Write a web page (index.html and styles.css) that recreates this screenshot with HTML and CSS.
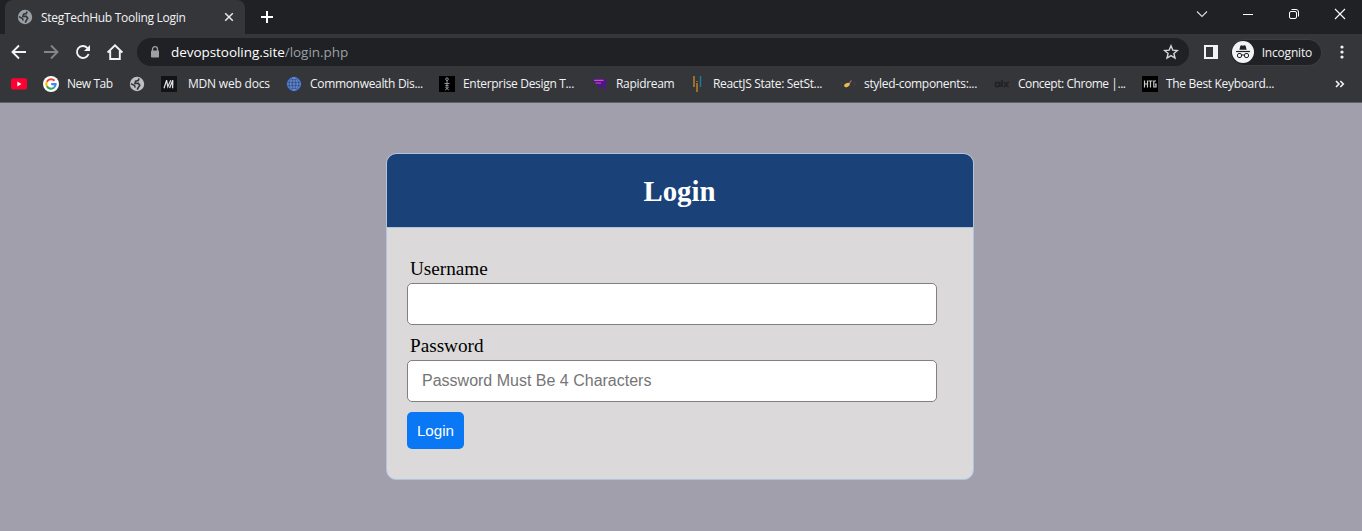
FILE: index.html
```
<!DOCTYPE html>
<html lang="en">
<head>
<meta charset="utf-8">
<title>StegTechHub Tooling Login</title>
<link rel="stylesheet" href="styles.css">
</head>
<body>
<svg width="0" height="0" class="defs">
  <symbol id="globe" viewBox="0 0 16 16"><circle cx="8" cy="8" r="7.2" fill="currentColor"/><path d="M10 2.4 9.3 4.6 6.6 5.2 6 7.4h3.4l1.3 1.8-1.2 1.9-1.3 2.6" fill="none" stroke="#35363a" stroke-width="1.7"/><path d="m1.8 7.6 3.8 2 .6 2" fill="none" stroke="#35363a" stroke-width="1.5"/></symbol>
</svg>
<header class="browser">
  <div class="tabstrip">
    <div class="tab">
      <svg class="tab-icon"><use href="#globe"/></svg>
      <span class="tab-title">StegTechHub Tooling Login</span>
      <svg class="tab-close" viewBox="0 0 10 10"><path d="M1.2 1.2 8.8 8.8M8.8 1.2 1.2 8.8" stroke="#e8eaed" stroke-width="1.5"/></svg>
    </div>
    <svg class="tab-new" viewBox="0 0 12 12"><path d="M6 0v12M0 6h12" stroke="#fff" stroke-width="2"/></svg>
    <div class="window-controls">
      <svg viewBox="0 0 12 12"><path d="m1 3.5 5 5 5-5" fill="none" stroke="#ddd" stroke-width="1.1"/></svg>
      <svg viewBox="0 0 12 12"><path d="M1 6.5h10" stroke="#fff"/></svg>
      <svg viewBox="0 0 12 12"><rect x="1.5" y="3.5" width="7" height="7" rx="1.5" fill="none" stroke="#fff"/><path d="M3.5 1.5H8A2.5 2.5 0 0 1 10.5 4v4.5" fill="none" stroke="#fff"/></svg>
      <svg viewBox="0 0 12 12"><path d="m1 1 10 10M11 1 1 11" stroke="#fff" stroke-width="1.1"/></svg>
    </div>
  </div>
  <div class="toolbar">
    <div class="nav">
      <svg viewBox="0 0 16 16"><path d="M15 8H2M8 1.5 1.5 8 8 14.5" fill="none" stroke="#f1f3f4" stroke-width="1.9"/></svg>
      <svg viewBox="0 0 16 16"><path d="M1 8h13M8 1.5 14.5 8 8 14.5" fill="none" stroke="#85868a" stroke-width="1.9"/></svg>
      <svg viewBox="0 0 16 16"><path d="M13.6 10A6 6 0 1 1 12.3 3.8L14 5.5" fill="none" stroke="#f1f3f4" stroke-width="1.9"/><path d="M15 1v6H9z" fill="#f1f3f4"/></svg>
      <svg viewBox="0 0 16 16"><path d="M.6 8.6 8 1.3l7.4 7.3M3.2 7v8h9.6V7" fill="none" stroke="#f1f3f4" stroke-width="1.9"/></svg>
    </div>
    <div class="omnibox">
      <svg class="lock" viewBox="0 0 10 12"><path d="M2.5 5V3.2a2.5 2.5 0 0 1 5 0V5" fill="none" stroke="#9aa0a6" stroke-width="1.3"/><rect x="1" y="4.5" width="8" height="7" rx=".8" fill="#9aa0a6"/></svg>
      <span class="url">devopstooling.site<span class="path">/login.php</span></span>
      <svg class="star" viewBox="0 0 16 16"><path d="m8 1.8 1.8 4.3 4.6.4-3.5 3 1.1 4.6-4-2.5-4 2.5 1.1-4.6-3.5-3 4.6-.4z" fill="none" stroke="#d5d7da" stroke-width="1.4"/></svg>
    </div>
    <svg class="panel" viewBox="0 0 14 14"><path fill-rule="evenodd" d="M0 0h14v14H0zM2 2v10h7V2z" fill="#f1f3f4"/></svg>
    <div class="incognito">
      <svg viewBox="0 0 22 22"><circle cx="11" cy="11" r="11" fill="#f1f3f4"/><path d="m7.4 8.8 1-4 1-.5 1.6.5 1.6-.5 1 .5 1 4z" fill="#202124"/><path d="M4 10.5h14" stroke="#202124" stroke-width="1.2"/><rect x="5.5" y="12.5" width="4" height="4" rx="1.5" fill="none" stroke="#202124"/><rect x="12.5" y="12.5" width="4" height="4" rx="1.5" fill="none" stroke="#202124"/><path d="M9.5 14h3" stroke="#202124"/></svg>
      <span>Incognito</span>
    </div>
    <svg class="menu" viewBox="0 0 4 14"><g fill="#f1f3f4"><circle cx="2" cy="2" r="1.6"/><circle cx="2" cy="7" r="1.6"/><circle cx="2" cy="12" r="1.6"/></g></svg>
  </div>
  <nav class="bookmarks">
    <a><svg viewBox="0 0 16 16"><rect y="2.2" width="16" height="11.4" rx="2" fill="#ff0033"/><path d="M6.3 5.5v5L10.5 8z" fill="#fff"/></svg></a>
    <a><svg viewBox="0 0 16 16"><circle cx="8" cy="8" r="8" fill="#fff"/><g fill="none" stroke-width="2.1"><path d="M11.5 4.8A4.7 4.7 0 0 0 3.9 5.7" stroke="#ea4335"/><path d="M3.9 5.7a4.7 4.7 0 0 0 0 4.6" stroke="#fbbc05"/><path d="M3.9 10.3a4.7 4.7 0 0 0 7.2 1.2" stroke="#34a853"/><path d="M11.1 11.5c1.2-1 1.6-2.2 1.5-3.4H8.2" stroke="#4285f4"/></g></svg><span class="newtab">New Tab</span></a>
    <a class="plain"><svg><use href="#globe"/></svg></a>
    <a class="mdn"><svg viewBox="0 0 16 16"><path d="M0 0h16v16H0z" fill="#121317"/><path d="m3 12.2 2.6-8 1.2 6.6 3-6.6" fill="none" stroke="#e1e1e1" stroke-width="1.2"/><path d="m8.6 12 3.2-7.8-.2 8" fill="none" stroke="#e1e1e1" stroke-width="1.3"/></svg><span>MDN web docs</span></a>
    <a><svg class="world" viewBox="0 0 16 16"><circle cx="8" cy="8" r="7.6" fill="#24468c"/><g fill="none" stroke="#7e9bd4" stroke-width=".8"><circle cx="8" cy="8" r="6.3"/><ellipse cx="8" cy="8" rx="3.3" ry="6.3"/><path d="M8 1.7v12.6M1.7 8h12.6M2.7 5h10.6M2.7 11h10.6"/></g></svg><span>Commonwealth Dis...</span></a>
    <a><svg viewBox="0 0 16 16"><path d="M0 0h16v16H0z" fill="#000"/><g fill="none" stroke="#969696"><path d="M8 4v8M5.5 7.5h5M6.5 9.5h3M6.2 14l3.6-3M9.8 14l-3.6-3"/><circle cx="8" cy="3.2" r="1.3"/></g></svg><span>Enterprise Design T...</span></a>
    <a><svg viewBox="0 0 16 16"><path d="M1 3h11.5l2 1.5v3.2L13 9l1.8 4h-2.5L10.5 9.5H9V13H6.5V9.8L4.5 8.5 1 4.5z" fill="#50148f"/><path d="M2 4.4h9.5M3.5 7H9" stroke="#d84bc8" stroke-width="1.1"/></svg><span>Rapidream</span></a>
    <a><svg viewBox="0 0 16 16"><path d="M5 0v11M8 5v1M8 7v9" stroke="#bd812e" stroke-width="1.5"/><path d="M11.5 0v11" stroke="#187c9c" stroke-width="1.5"/></svg><span>ReactJS State: SetSt...</span></a>
    <a><svg viewBox="0 0 16 16"><path d="m2 6-1 2 1 2M14 6l1 2-1 2" fill="none" stroke="#414045"/><path d="m8 8 3-4 .8 1L9 9z" fill="#a56586"/><ellipse cx="7" cy="9" rx="3" ry="1.9" transform="rotate(-25 7 9)" fill="#edb949"/></svg><span>styled-components:...</span></a>
    <a><svg viewBox="0 0 16 16"><g fill="none" stroke="#202124" stroke-width="1.6"><circle cx="3.4" cy="8.5" r="2.1"/><path d="M5.8 6v5M8 4v7M10 6l4.5 5M14.5 6 10 11"/></g></svg><span class="concept">Concept: Chrome |...</span></a>
    <a><svg viewBox="0 0 16 16"><path d="M0 0h16v16H0z" fill="#000"/><path d="M2.5 4.5v7M5.5 4.5v7M2.5 8h3M6.5 5h4M8.5 5v6.5M14 5h-2.2v6H14V8.2h-1" fill="none" stroke="#ccc" stroke-width="1.2"/></svg><span>The Best Keyboard...</span></a>
    <svg class="more" viewBox="0 0 10 8"><path d="m1 1 3 3-3 3M5.3 1l3 3-3 3" fill="none" stroke="#f1f3f4" stroke-width="1.6"/></svg>
  </nav>
</header>
<main class="page">
  <section class="card">
    <h1 class="card-title">Login</h1>
    <form class="form">
      <label for="user">Username</label>
      <input id="user" type="text">
      <label for="pass">Password</label>
      <input id="pass" type="password" placeholder="Password Must Be 4 Characters">
      <button type="button">Login</button>
    </form>
  </section>
</main>
</body>
</html>
```
FILE: styles.css
```
* { box-sizing: border-box; }
body { margin: 0; height: 531px; overflow: hidden; background: #a09fab; font-family: "Liberation Serif", serif; }
svg { display: block; flex: none; }
.defs { display: none; }
.browser { height: 103px; background: #35363a; border-bottom: 1px solid #616166; color: #f1f3f4; font-family: "Open Sans", "Noto Sans", sans-serif; font-size: 12px; }
.tabstrip { height: 34px; background: #202124; display: flex; align-items: center; }
.tab { width: 240px; height: 34px; margin-left: 5px; padding: 0 11px 0 12px; background: #35363a; border-radius: 8px 8px 0 0; display: flex; align-items: center; }
.tab-icon { width: 16px; height: 16px; color: #9aa0a6; }
.tab-title { margin-left: 8px; flex: 1; white-space: nowrap; letter-spacing: -.29px; }
.tab-close { width: 10px; height: 10px; }
.tab-new { width: 12px; height: 12px; margin-left: 16px; }
.window-controls { margin-left: auto; margin-right: 16px; margin-bottom: 6px; display: flex; gap: 34px; }
.window-controls svg { width: 12px; height: 12px; }
.toolbar { height: 35px; display: flex; align-items: center; padding-top: 1px; }
.nav { display: flex; gap: 16px; margin-left: 11px; }
.nav svg { width: 16px; height: 16px; }
.omnibox { width: 1052px; height: 28px; margin-left: 14px; border-radius: 14px; background: #202124; display: flex; align-items: center; padding: 0 10px 0 13px; }
.lock { width: 10px; height: 12px; }
.url { margin-left: 11px; flex: 1; font-size: 13.5px; letter-spacing: -.05px; color: #fff; }
.path { color: #9aa0a6; }
.star { width: 16px; height: 16px; }
.panel { width: 14px; height: 14px; margin-left: 15px; }
.incognito { width: 91px; height: 27px; margin-left: 13px; padding: 0 9px 0 1px; background: #202124; border: 1px solid #3d3e42; border-left: 0; border-radius: 14px; display: flex; align-items: center; justify-content: space-between; }
.incognito svg { width: 22px; height: 22px; }
.incognito span { letter-spacing: -.2px; }
.menu { width: 4px; height: 14px; margin-left: 18px; }
.bookmarks { height: 30px; padding-left: 11px; display: grid; align-items: center; grid-template-columns: 32px 86px 32px 126px 152px 153px 97px 151px 154px 148px 193px 10px; }
.bookmarks a { display: flex; align-items: center; gap: 8px; white-space: nowrap; letter-spacing: -.32px; }
.bookmarks a svg { width: 16px; height: 16px; }
.bookmarks a span { margin-top: -1px; }
.bookmarks .newtab { letter-spacing: -.45px; }
.bookmarks .concept { letter-spacing: -.45px; }
.bookmarks .mdn { gap: 11px; letter-spacing: -.2px; }
.bookmarks .world { margin: 0 0 0 -1px; }
.plain { color: #bdc1c6; }
.bookmarks .more { width: 10px; height: 8px; }
.page { padding-top: 50px; }
.card { width: 588px; height: 327px; margin-left: 386px; border: 1px solid #b0c4de; border-radius: 10px; background: #dbd9d9; overflow: hidden; }
.card-title { margin: 0; height: 74px; padding-right: 1px; border-bottom: 1px solid #b0c4de; background: #1b4179; color: #fff; font-size: 28.8px; line-height: 75px; text-align: center; }
.form { padding: 30px 36px 0 20px; }
.form label { display: block; height: 25px; margin-left: 3px; font-size: 19.2px; line-height: 21px; color: #000; }
.form input { display: block; width: 530px; height: 42px; margin: 0 0 10px; padding: 5px 14px; border: 1px solid gray; border-radius: 5px; background: #fff; font: 16px "Liberation Sans", Arial, sans-serif; }
.form input::placeholder { color: #757575; }
.form button { display: block; width: 57px; height: 37px; padding: 0; border: 0; border-radius: 5px; background: #0a77f4; color: #fff; font: 15.2px "Liberation Sans", Arial, sans-serif; }
```
